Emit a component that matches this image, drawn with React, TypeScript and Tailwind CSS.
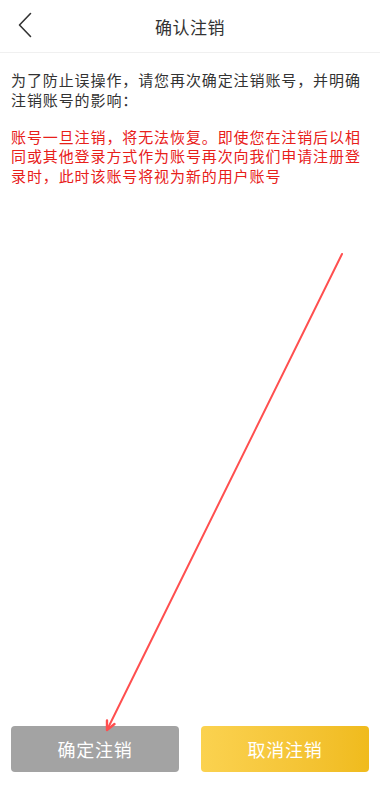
export default function App() {
  return (
    <div
      className="relative flex h-[807px] w-[380px] flex-col overflow-hidden bg-white"
      style={{ fontFamily: '"Noto Sans CJK SC", "Noto Sans", sans-serif' }}
    >
      <header className="relative flex h-[53px] shrink-0 items-center justify-center border-b border-[#f0f0f0]">
        <button className="absolute left-[14px] top-[10px] flex h-[30px] w-[22px] items-center justify-center" aria-label="返回">
          <svg width="16" height="26" viewBox="0 0 16 26" fill="none">
            <path d="M13.5 1.5 L2.5 13 L13.5 24.5" stroke="#333" strokeWidth="1.6" strokeLinecap="round" strokeLinejoin="round" />
          </svg>
        </button>
        <h1 className="text-[17px] leading-none tracking-[0.5px] text-[#333]">确认注销</h1>
      </header>

      <main className="flex-1 px-[11px] pt-[17px]">
        <p className="text-[15px] leading-[20px] tracking-[0.9px] text-[#333]">
          为了防止误操作，请您再次确定注销账号，并明确注销账号的影响：
        </p>
        <p className="mt-[17px] text-[15px] leading-[19.4px] tracking-[0.9px] text-[#e8201a]">
          账号一旦注销，将无法恢复。即使您在注销后以相同或其他登录方式作为账号再次向我们申请注册登录时，此时该账号将视为新的用户账号
        </p>
      </main>

      <footer className="flex shrink-0 gap-[22px] px-[11px] pb-[35px]">
        <button className="flex h-[46px] w-[170px] items-center justify-center rounded-[4px] bg-[#a3a3a3] text-[18px] tracking-[0.8px] text-white">
          确定注销
        </button>
        <button className="flex h-[46px] w-[170px] items-center justify-center rounded-[4px] bg-gradient-to-r from-[#fbd24f] to-[#f0bb1c] text-[18px] tracking-[0.8px] text-white">
          取消注销
        </button>
      </footer>

      <svg className="pointer-events-none absolute inset-0" width="380" height="807" viewBox="0 0 380 807">
        <path d="M342 254 L107 730" stroke="#ff4f4f" strokeWidth="2" strokeLinecap="round" />
        <path d="M107 720.5 L107 730 L114.5 724" stroke="#ff4f4f" strokeWidth="2.4" fill="none" strokeLinecap="round" strokeLinejoin="round" />
      </svg>
    </div>
  )
}
